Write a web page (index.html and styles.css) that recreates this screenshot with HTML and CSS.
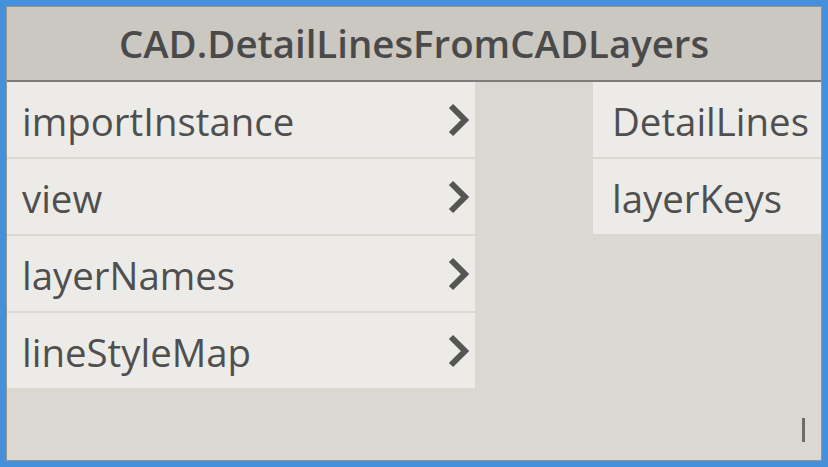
FILE: index.html
```html
<!DOCTYPE html>
<html>
<head>
<meta charset="utf-8">
<link rel="stylesheet" href="styles.css">
</head>
<body>
<div class="node">
  <div class="header">CAD.DetailLinesFromCADLayers</div>
  <div class="body">
    <div class="inputs">
      <div class="port in"><span class="label">importInstance</span><svg class="chev" viewBox="0 0 22 34" width="22" height="34"><polyline points="3,3 17,17 3,31"/></svg></div>
      <div class="port in"><span class="label">view</span><svg class="chev" viewBox="0 0 22 34" width="22" height="34"><polyline points="3,3 17,17 3,31"/></svg></div>
      <div class="port in"><span class="label">layerNames</span><svg class="chev" viewBox="0 0 22 34" width="22" height="34"><polyline points="3,3 17,17 3,31"/></svg></div>
      <div class="port in"><span class="label">lineStyleMap</span><svg class="chev" viewBox="0 0 22 34" width="22" height="34"><polyline points="3,3 17,17 3,31"/></svg></div>
    </div>
    <div class="outputs">
      <div class="port out"><span class="label">DetailLines</span></div>
      <div class="port out"><span class="label">layerKeys</span></div>
    </div>
  </div>
  <div class="lacing"></div>
</div>
</body>
</html>
```

FILE: styles.css
```css
html, body {
  margin: 0;
  padding: 0;
}
body {
  background: #4590da;
  width: 828px;
  height: 467px;
  padding: 6px;
  box-sizing: border-box;
  font-family: "Open Sans", "DejaVu Sans", sans-serif;
  color: #4f4f4f;
}
.node {
  position: relative;
  height: 100%;
  box-sizing: border-box;
  border: 1px solid #97948f;
  background: #dbd8d1;
  display: flex;
  flex-direction: column;
}
.header {
  background: #cbc7c1;
  border-bottom: 2px solid #7e7c79;
  display: flex;
  align-items: center;
  justify-content: center;
  font-size: 38.4px;
  font-weight: 600;
  color: #4a4a4a;
  height: 73px;
  line-height: 1;
}
.body {
  display: flex;
  justify-content: space-between;
  align-items: flex-start;
}
.inputs {
  width: 468px;
  display: flex;
  flex-direction: column;
  gap: 2px;
}
.outputs {
  width: 228px;
  display: flex;
  flex-direction: column;
  gap: 2px;
}
.port {
  height: 75px;
  background: #edebe7;
  display: flex;
  align-items: center;
  font-size: 38.4px;
}
.port.in {
  justify-content: space-between;
  padding: 0 5px 0 15px;
}
.port.out {
  padding-left: 19px;
}
.label {
  line-height: 1;
  padding-top: 4px;
}
.chev {
  display: block;
}
.chev polyline {
  fill: none;
  stroke: #555555;
  stroke-width: 6;
  stroke-linejoin: miter;
}
.lacing {
  position: absolute;
  right: 16px;
  bottom: 18px;
  width: 3px;
  height: 24px;
  background: #6e6c69;
}
```
